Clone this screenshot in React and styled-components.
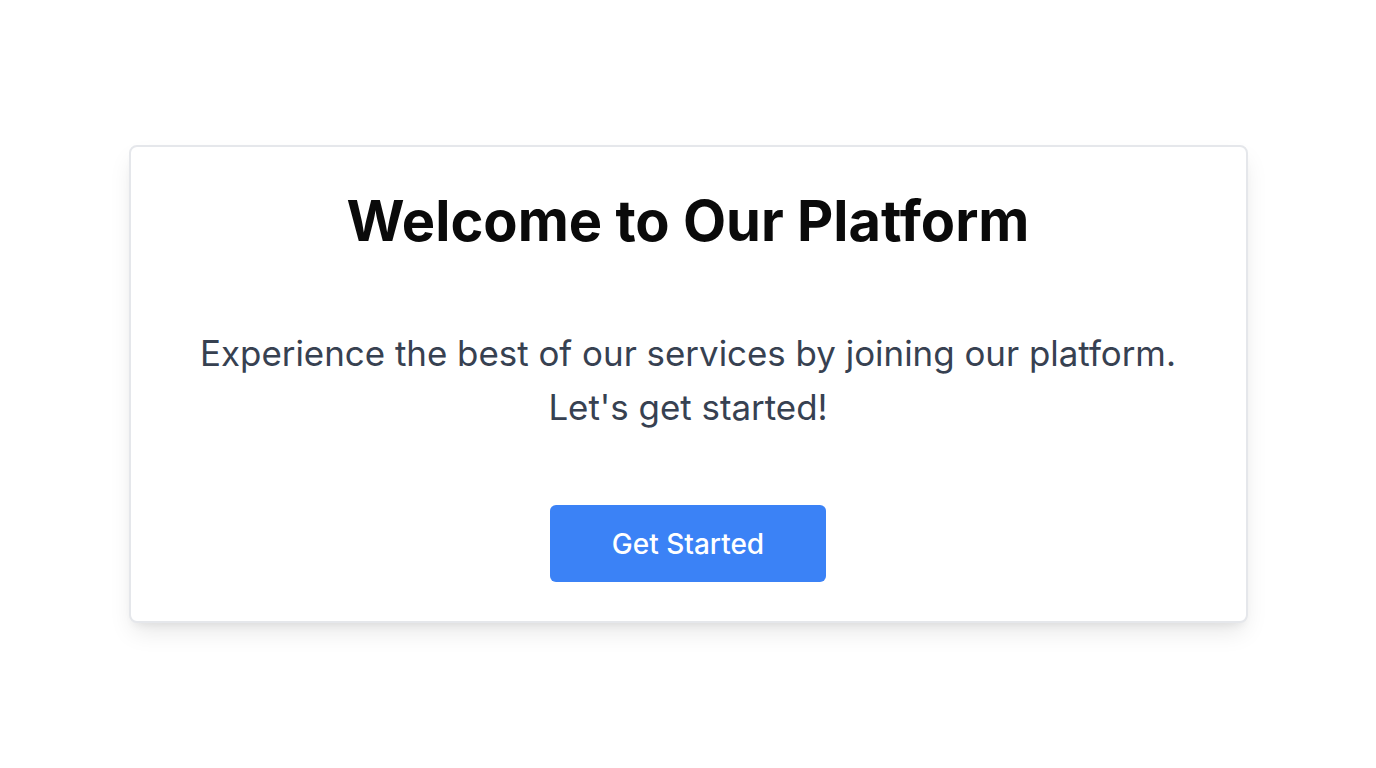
import React from 'react'
import styled, { createGlobalStyle } from 'styled-components'

const GlobalStyle = createGlobalStyle`
  html, body {
    margin: 0;
    padding: 0;
    background: #ffffff;
    font-family: Inter, "Noto Sans", sans-serif;
    font-variant-ligatures: none;
  }
`

const Page = styled.main`
  min-height: 100vh;
  display: flex;
  align-items: center;
  justify-content: center;
`

const Card = styled.section`
  box-sizing: border-box;
  width: 1119px;
  padding: 41px 40px 39px;
  display: flex;
  flex-direction: column;
  align-items: center;
  gap: 71px;
  background: #ffffff;
  border: 2px solid #e5e7eb;
  border-radius: 8px;
  box-shadow: 0 12px 24px -4px rgba(0, 0, 0, 0.1), 0 6px 10px -5px rgba(0, 0, 0, 0.08);
`

const Title = styled.h1`
  margin: 0;
  font-size: 56px;
  line-height: 67px;
  font-weight: 700;
  color: #0a0a0a;
  text-align: center;
`

const Lead = styled.p`
  margin: 0;
  font-size: 34.9px;
  line-height: 54px;
  font-weight: 400;
  color: #374151;
  text-align: center;
`

const Button = styled.button`
  width: 276px;
  height: 77px;
  border: none;
  border-radius: 6px;
  background: #3b82f6;
  color: #ffffff;
  font-family: inherit;
  font-size: 28px;
  font-weight: 500;
  font-variant-ligatures: none;
  cursor: pointer;
`

export default function App() {
  return (
    <>
      <GlobalStyle />
      <Page>
        <Card>
          <Title>Welcome to Our Platform</Title>
          <Lead>
            Experience the best of our services by joining our platform.
            <br />
            Let's get started!
          </Lead>
          <Button>Get Started</Button>
        </Card>
      </Page>
    </>
  )
}
